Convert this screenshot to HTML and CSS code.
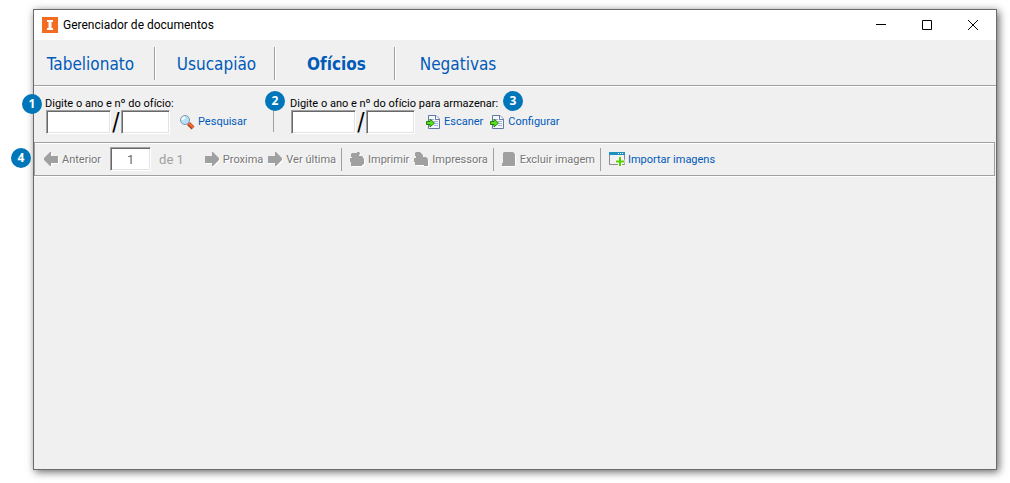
FILE: index.html
```html
<!DOCTYPE html>
<html lang="pt-BR">
<head>
  <meta charset="utf-8">
  <title>Gerenciador de documentos</title>
  <link rel="stylesheet" href="styles.css">
</head>
<body>
  <svg class="sprite" aria-hidden="true">
    <symbol id="arrow-right" viewBox="0 0 15 15">
      <path d="M0 4H7V0H8L14 6V8L8 14H7V11H0Z" />
    </symbol>
    <symbol id="arrow-left" viewBox="0 0 15 15">
      <path d="M14 4H7V0H6L0 6V8L6 14H7V11H14Z" />
    </symbol>
    <symbol id="printer" viewBox="0 0 15 15">
      <path d="M2 1H7V0H9L10 1L9 4H12L14 7V12L12 13V14H1V10H0V6H2V5H1V2Z" />
    </symbol>
    <symbol id="printer-setup" viewBox="0 0 15 15">
      <path d="M2 0H6L9 3V5H12L14 7V14H10V13H1V10H0V6H2V4H1V1Z" />
    </symbol>
    <symbol id="page" viewBox="0 0 15 15">
      <path d="M2 0H11L13 2V14H0V11H1V1Z" />
    </symbol>
    <symbol id="scan" viewBox="0 0 14 16">
      <path d="M2.500 1.500H10L13.500 5V14.500H2.500Z" fill="#f4f8fd" stroke="#6576a3" />
      <path d="M9.500 1.500V5.500H13.500" fill="#fff" stroke="#6576a3" />
      <path d="M5 5.500H8M8 7.500H12M9 9.500H12M8 11.500H12" stroke="#9db4da" />
      <path d="M0.500 7.500H4V5L8.500 9L4 13V10.500H0.500Z" fill="#5be01c" stroke="#247a12" />
    </symbol>
  </svg>

  <div class="window">
    <div class="titlebar">
      <svg class="logo" viewBox="0 0 16 16">
        <rect width="16" height="16" fill="#f26d21" />
        <path d="M5 3H11V5H9.500V11H11V13H5V11H6.500V5H5Z" fill="#fff" />
      </svg>
      <span class="title">Gerenciador de documentos</span>
      <div class="window-buttons">
        <button aria-label="Minimizar"><svg width="12" height="12" viewBox="0 0 12 12"><path d="M1 5.500H11" /></svg></button>
        <button aria-label="Maximizar"><svg width="12" height="12" viewBox="0 0 12 12"><path d="M1.500 1.500H10.500V10.500H1.500Z" /></svg></button>
        <button aria-label="Fechar"><svg width="12" height="12" viewBox="0 0 12 12"><path d="M1 1L11 11M11 1L1 11" /></svg></button>
      </div>
    </div>

    <nav class="tabs">
      <a class="tab" href="#">Tabelionato</a>
      <a class="tab" href="#">Usucapião</a>
      <a class="tab active" href="#">Ofícios</a>
      <a class="tab" href="#">Negativas</a>
    </nav>

    <div class="search">
      <span class="badge badge-1">1</span>
      <div class="search-group">
        <label for="ano-oficio">Digite o ano e nº do ofício:</label>
        <div class="search-row">
          <input class="field year" id="ano-oficio" type="text">
          <span class="slash">/</span>
          <input class="field number" type="text" aria-label="Número do ofício">
          <button class="action">
            <svg width="16" height="16" viewBox="0 0 16 16">
              <path d="M9.500 9.500L14 14" stroke="#a93a1c" stroke-width="4" />
              <path d="M9.500 9L14 13.500" stroke="#f2713a" stroke-width="2" />
              <circle cx="6" cy="6" r="4.500" fill="#b5e2fa" stroke="#8495a8" />
              <path d="M3.500 6Q3.500 3.500 6 3.500" fill="none" stroke="#fff" stroke-width="2" />
            </svg>
            Pesquisar
          </button>
        </div>
      </div>
      <div class="search-group second">
        <span class="badge badge-2">2</span>
        <span class="badge badge-3">3</span>
        <label for="ano-armazenar">Digite o ano e nº do ofício para armazenar:</label>
        <div class="search-row">
          <input class="field year" id="ano-armazenar" type="text">
          <span class="slash">/</span>
          <input class="field number" type="text" aria-label="Número do ofício para armazenar">
          <button class="action"><svg width="14" height="16"><use href="#scan" /></svg>Escaner</button>
          <button class="action next"><svg width="14" height="16"><use href="#scan" /></svg>Configurar</button>
        </div>
      </div>
    </div>

    <div class="toolbar">
      <span class="badge badge-4">4</span>
      <button class="tool" disabled><svg width="15" height="15"><use href="#arrow-left" /></svg>Anterior</button>
      <input class="field page-number" type="text" value="1" aria-label="Página" disabled>
      <span class="page-count">de 1</span>
      <button class="tool" disabled><svg width="15" height="15"><use href="#arrow-right" /></svg>Proxima</button>
      <button class="tool" disabled><svg width="15" height="15"><use href="#arrow-right" /></svg>Ver última</button>
      <span class="divider"></span>
      <button class="tool" disabled><svg width="15" height="15"><use href="#printer" /></svg>Imprimir</button>
      <button class="tool" disabled><svg width="15" height="15"><use href="#printer-setup" /></svg>Impressora</button>
      <span class="divider"></span>
      <button class="tool" disabled><svg width="15" height="15"><use href="#page" /></svg>Excluir imagem</button>
      <span class="divider"></span>
      <button class="tool import">
        <svg width="16" height="16" viewBox="0 0 16 16">
          <path d="M0.500 1.500H15.500V13.500H0.500Z" fill="#f1f1f1" stroke="#8a8a8a" />
          <path d="M0 1H16V4H0Z" fill="#1e8fc0" />
          <path d="M9 2.500H10M11 2.500H12M13 2.500H14" stroke="#fff" />
          <path d="M11 6V15M6.500 10.500H15.500" stroke="#fff" stroke-width="4" />
          <path d="M11 6V15M7 10.500H15" stroke="#56cf00" stroke-width="2" />
        </svg>
        Importar imagens
      </button>
    </div>
  </div>
</body>
</html>
```

FILE: styles.css
```css
* {
  box-sizing: border-box;
}

body {
  margin: 0;
  background: #fff;
  font-family: Roboto, sans-serif;
  font-size: 11px;
  color: #000;
}

.sprite {
  display: none;
}

.window {
  display: flex;
  flex-direction: column;
  height: calc(100vh - 22px);
  margin: 9px 13px 13px 33px;
  border: 1px solid #6b6b6b;
  background: #f0f0f0;
  box-shadow: 2px 2px 8px rgba(0, 0, 0, 0.6);
}

button {
  display: flex;
  align-items: center;
  padding: 0;
  border: none;
  background: none;
  font: inherit;
  white-space: nowrap;
}

/* title bar */
.titlebar {
  display: flex;
  align-items: center;
  height: 30px;
  padding-left: 8px;
  background: #fff;
}

.logo {
  width: 16px;
  height: 16px;
  margin-right: 5px;
}

.title {
  font-size: 12px;
}

.window-buttons {
  display: flex;
  margin-left: auto;
}

.window-buttons button {
  justify-content: center;
  width: 46px;
  height: 28px;
}

.window-buttons path {
  fill: none;
  stroke: #000;
}

/* tabs */
.tabs {
  display: flex;
  align-items: center;
  height: 47px;
  padding-left: 1px;
  border-bottom: 1px solid #fff;
  box-shadow: inset 0 -1px #a0a0a0;
}

.tab {
  width: 120px;
  height: 33px;
  padding-left: 4px;
  border-right: 1px solid #a0a0a0;
  box-shadow: 1px 0 #fff;
  font-family: "DejaVu Sans Condensed", "DejaVu Sans", sans-serif;
  font-size: 17px;
  line-height: 34px;
  text-align: center;
  text-decoration: none;
  color: #005ab9;
}

.tab:first-child {
  padding: 0 8px 0 0;
}

.tab:last-child {
  padding-left: 6px;
  border-right: none;
  box-shadow: none;
}

.tab.active {
  font-weight: bold;
}

/* search */
.search {
  position: relative;
  display: flex;
  height: 55px;
  padding: 10px 0 0 11px;
}

.search-group {
  position: relative;
  width: 228px;
}

.search-group.second {
  width: auto;
  height: 35px;
  padding-left: 16px;
  border-left: 1px solid #a0a0a0;
}

.search-group label {
  display: block;
  height: 13px;
  line-height: 13px;
  white-space: nowrap;
}

.search-row {
  display: flex;
  align-items: center;
  padding-left: 1px;
}

.field {
  height: 24px;
  padding: 0 4px;
  border: 1px solid #fff;
  border-top-color: #a0a0a0;
  border-left-color: #a0a0a0;
  box-shadow: inset 1px 1px #696969, inset -1px -1px #e3e3e3;
  background: #fff;
  font: inherit;
}

.year {
  width: 65px;
}

.number {
  width: 49px;
}

.slash {
  width: 10px;
  font-family: "DejaVu Sans Condensed", sans-serif;
  font-size: 24px;
  line-height: 24px;
  text-align: center;
}

.action {
  gap: 3px;
  margin-left: 9px;
  padding-bottom: 1px;
  color: #005ab9;
}

.second .action {
  gap: 4px;
  margin-left: 11px;
}

.second .action.next {
  margin-left: 7px;
}

/* toolbar */
.toolbar {
  position: relative;
  display: flex;
  align-items: center;
  height: 34px;
  margin-right: 1px;
  padding-left: 9px;
  border: 1px solid #a0a0a0;
  box-shadow: 0 1px #fff, inset 0 1px #fff;
}

.tool {
  gap: 3px;
  margin-right: 5px;
  color: #6d6d6d;
}

.tool:disabled {
  color: #767676;
  text-shadow: 1px 1px #fff;
}

.tool:disabled svg {
  fill: #a0a0a0;
  filter: drop-shadow(1px 1px #fff);
}

.tool.import {
  color: #005ab9;
}

.page-number {
  width: 41px;
  margin-left: 4px;
  font-size: 13px;
  text-align: center;
  color: #6d6d6d;
}

.page-count {
  margin: 0 21px 0 8px;
  font-size: 13px;
  color: #a0a0a0;
}

.divider {
  width: 1px;
  height: 23px;
  margin-right: 8px;
  background: #a0a0a0;
}

/* numbered markers */
.badge {
  position: absolute;
  width: 20px;
  height: 20px;
  border-radius: 50%;
  background: #0076ba;
  font-family: "Open Sans", sans-serif;
  font-size: 12px;
  font-weight: bold;
  line-height: 20px;
  text-align: center;
  color: #fff;
}

.badge-1 {
  top: 7px;
  left: -12px;
}

.badge-2 {
  top: -6px;
  left: -9px;
}

.badge-3 {
  top: -6px;
  left: 229px;
}

.badge-4 {
  top: 5px;
  left: -24px;
}
```
